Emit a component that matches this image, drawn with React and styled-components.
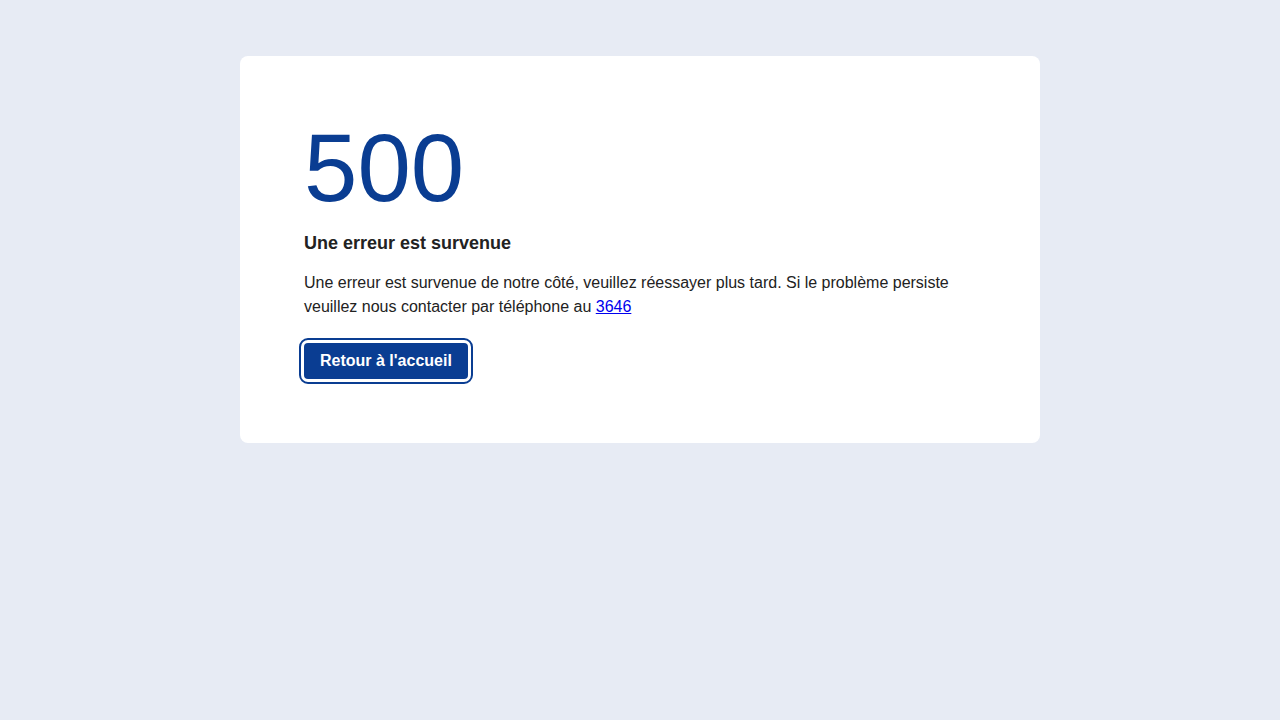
import React from "react";
import styled, { createGlobalStyle } from "styled-components";

const GlobalStyle = createGlobalStyle`
  body {
    margin: 0;
    background: #e7ebf4;
    font-family: "Liberation Sans", Arial, sans-serif;
    color: #222222;
  }
`;

const ErrorPage = () => {
  return (
    <Wrapper>
      <GlobalStyle />
      <Card>
        <Code>500</Code>
        <Title>Une erreur est survenue</Title>
        <Message>
          Une erreur est survenue de notre côté, veuillez réessayer plus tard. Si le problème persiste
          veuillez nous contacter par téléphone au <Phone href="#">3646</Phone>
        </Message>
        <HomeButton>Retour à l'accueil</HomeButton>
      </Card>
    </Wrapper>
  );
};

export default ErrorPage;

const Wrapper = styled.div`
  min-height: 720px;
  padding-top: 56px;
  box-sizing: border-box;
  display: flex;
  justify-content: center;
  align-items: flex-start;
`;

const Card = styled.div`
  width: 800px;
  box-sizing: border-box;
  padding: 64px;
  background: #ffffff;
  border-radius: 8px;
  display: flex;
  flex-direction: column;
  align-items: flex-start;
`;

const Code = styled.h1`
  margin: 0;
  font-size: 96px;
  font-weight: 400;
  line-height: 96px;
  color: #0a3d92;
`;

const Title = styled.h2`
  margin: 13px 0 0;
  font-size: 18px;
  font-weight: 700;
  line-height: 28px;
`;

const Message = styled.p`
  margin: 14px 0 0;
  font-size: 16px;
  line-height: 24px;
`;

const Phone = styled.a`
  color: #0000ee;
  text-decoration: underline;
`;

const HomeButton = styled.button`
  margin-top: 24px;
  padding: 0 16px;
  height: 36px;
  border: none;
  border-radius: 4px;
  background: #0a3d92;
  color: #ffffff;
  font-family: "Liberation Sans", Arial, sans-serif;
  font-size: 16px;
  font-weight: 700;
  cursor: pointer;
  outline: 2px solid #0a3d92;
  outline-offset: 3px;
`;
